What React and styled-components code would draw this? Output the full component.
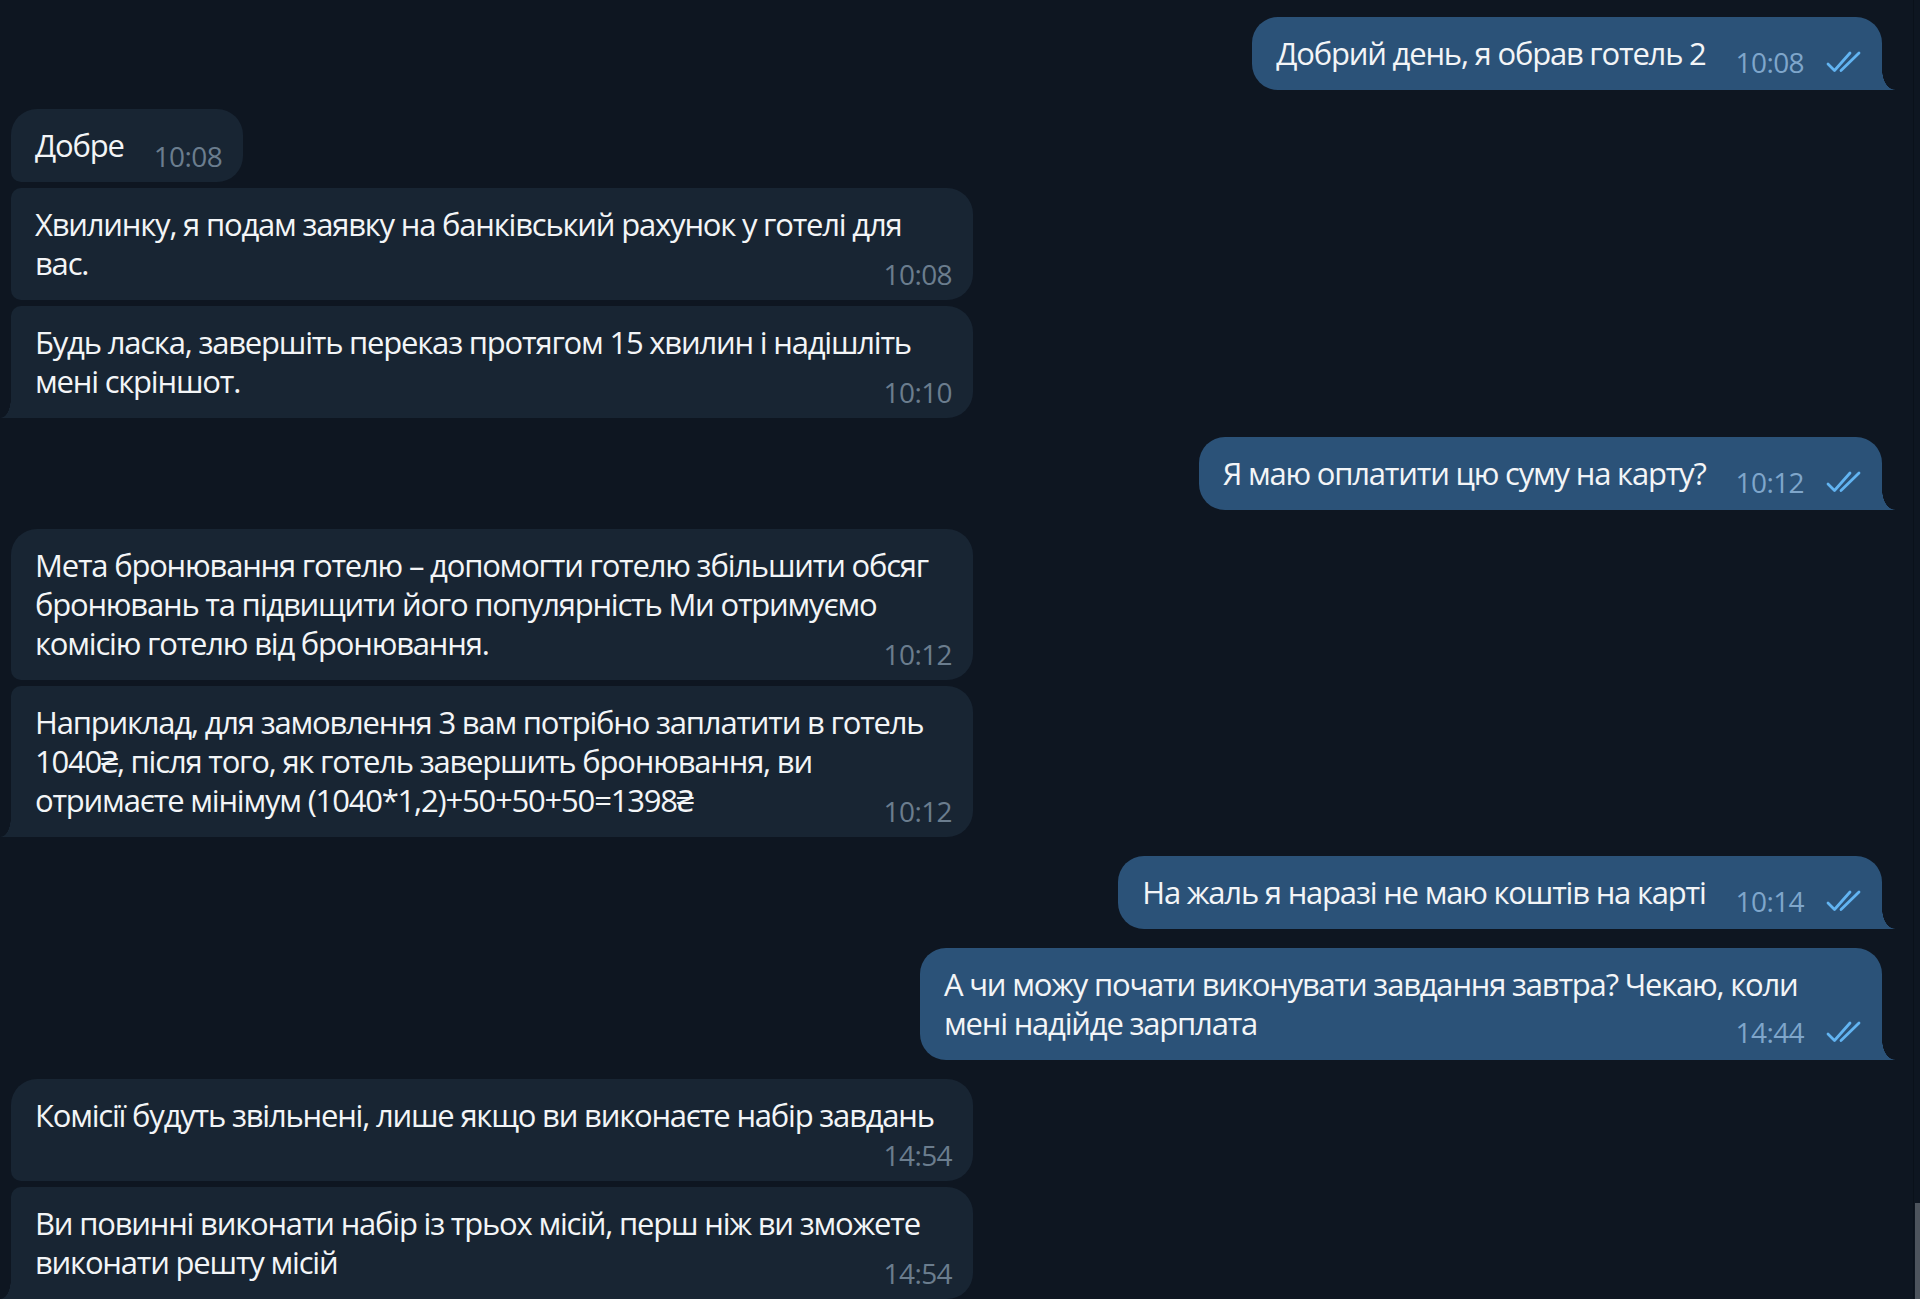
import React from "react";
import styled, { createGlobalStyle, css } from "styled-components";

const IN_BG = "#182533";
const OUT_BG = "#2b5278";

const GlobalStyle = createGlobalStyle`
  html, body {
    margin: 0;
    padding: 0;
    background: #0e1621;
  }
  body {
    font-family: "Open Sans", "Noto Sans", "DejaVu Sans", sans-serif;
    overflow: hidden;
  }
`;

const Page = styled.div`
  display: flex;
  height: 1299px;
  overflow: hidden;
  background: #0e1621;
`;

const Feed = styled.div`
  flex: 1;
  display: flex;
  flex-direction: column;
  padding: 0 31px 0 11px;
  margin-top: -60px;
`;

const ScrollTrack = styled.div`
  width: 6px;
  display: flex;
  flex-direction: column;
  justify-content: flex-end;
  border-left: 1px solid #0a111a;
`;

const ScrollThumb = styled.div`
  height: 96px;
  margin-left: 1px;
  background: #4d545d;
`;

const tailCss = (out) =>
  out
    ? css`
        &::after {
          content: "";
          position: absolute;
          bottom: 0;
          right: -13px;
          width: 13px;
          height: 20px;
          background: radial-gradient(ellipse 13px 20px at 100% 0, transparent 97%, ${OUT_BG} 100%);
        }
      `
    : css`
        &::after {
          content: "";
          position: absolute;
          bottom: 0;
          left: -10px;
          width: 10px;
          height: 20px;
          background: radial-gradient(ellipse 10px 20px at 0 0, transparent 97%, ${IN_BG} 100%);
        }
      `;

const Bubble = styled.div`
  position: relative;
  box-sizing: border-box;
  align-self: ${(p) => (p.$out ? "flex-end" : "flex-start")};
  width: ${(p) => (p.$wide ? "962px" : "auto")};
  margin-top: ${(p) => (p.$grouped ? 6 : 19)}px;
  padding: 17px ${(p) => (p.$out ? 18 : 21)}px 17px 24px;
  background: ${(p) => (p.$out ? OUT_BG : IN_BG)};
  color: #f3f5f7;
  border-radius: ${(p) => p.$radius};
  ${(p) => p.$tail && tailCss(p.$out)}
`;

const Line = styled.div`
  font-size: 31px;
  line-height: 39px;
  letter-spacing: -1.2px;
  white-space: pre;
`;

const LastRow = styled.div`
  display: flex;
  align-items: flex-end;
  justify-content: space-between;
  min-height: ${(p) => (p.$metaOnly ? "29px" : "auto")};
`;

const Meta = styled.div`
  display: flex;
  align-items: center;
  gap: 22px;
  margin-left: 30px;
  flex-shrink: 0;
`;

const Time = styled.span`
  font-size: 28px;
  line-height: 18px;
  letter-spacing: -0.6px;
  color: ${(p) => (p.$out ? "#7fa6cb" : "#6b7d8e")};
`;

const Checks = () => (
  <svg width="38" height="22" viewBox="0 0 38 22" fill="none">
    <path
      d="M2 13 L8.5 19.5 L24 2"
      stroke="#62b4f2"
      strokeWidth="2.8"
      strokeLinecap="round"
      strokeLinejoin="round"
    />
    <path d="M15 19.5 L33 2" stroke="#62b4f2" strokeWidth="2.8" strokeLinecap="round" />
  </svg>
);

const BIG = 26;
const SMALL = 10;

const radiusFor = (m) => {
  if (m.out) return `${BIG}px ${BIG}px 0 ${BIG}px`;
  const tl = m.grouped ? SMALL : BIG;
  const bl = m.tail ? 0 : SMALL;
  return `${tl}px ${BIG}px ${BIG}px ${bl}px`;
};

const messages = [
  { out: false, tail: true, lines: [""], time: "", cut: true },
  { out: true, tail: true, lines: ["Добрий день, я обрав готель 2"], time: "10:08" },
  { out: false, lines: ["Добре"], time: "10:08" },
  {
    out: false,
    grouped: true,
    wide: true,
    lines: ["Хвилинку, я подам заявку на банківський рахунок у готелі для", "вас."],
    time: "10:08",
  },
  {
    out: false,
    grouped: true,
    tail: true,
    wide: true,
    lines: ["Будь ласка, завершіть переказ протягом 15 хвилин і надішліть", "мені скріншот."],
    time: "10:10",
  },
  { out: true, tail: true, lines: ["Я маю оплатити цю суму на карту?"], time: "10:12" },
  {
    out: false,
    wide: true,
    lines: [
      "Мета бронювання готелю – допомогти готелю збільшити обсяг",
      "бронювань та підвищити його популярність Ми отримуємо",
      "комісію готелю від бронювання.",
    ],
    time: "10:12",
  },
  {
    out: false,
    grouped: true,
    tail: true,
    wide: true,
    lines: [
      "Наприклад, для замовлення 3 вам потрібно заплатити в готель",
      "1040₴, після того, як готель завершить бронювання, ви",
      "отримаєте мінімум (1040*1,2)+50+50+50=1398₴",
    ],
    time: "10:12",
  },
  { out: true, tail: true, lines: ["На жаль я наразі не маю коштів на карті"], time: "10:14" },
  {
    out: true,
    tail: true,
    wide: true,
    lines: ["А чи можу почати виконувати завдання завтра? Чекаю, коли", "мені надійде зарплата"],
    time: "14:44",
  },
  {
    out: false,
    wide: true,
    metaBelow: true,
    lines: ["Комісії будуть звільнені, лише якщо ви виконаєте набір завдань"],
    time: "14:54",
  },
  {
    out: false,
    grouped: true,
    tail: true,
    wide: true,
    lines: ["Ви повинні виконати набір із трьох місій, перш ніж ви зможете", "виконати решту місій"],
    time: "14:54",
  },
];

// last bubble of the previous group, scrolled almost out of view
const CutBubble = styled(Bubble)`
  width: 276px;
  height: 63px;
  margin-top: 0;
  margin-bottom: 4px;
`;

const Message = ({ m }) => {
  if (m.cut) {
    return <CutBubble $tail $radius={radiusFor(m)} />;
  }
  const body = m.metaBelow ? m.lines : m.lines.slice(0, -1);
  const last = m.metaBelow ? "" : m.lines[m.lines.length - 1];
  return (
    <Bubble
      $out={m.out}
      $grouped={m.grouped}
      $tail={m.tail}
      $wide={m.wide}
      $radius={radiusFor(m)}
    >
      {body.map((l, i) => (
        <Line key={i}>{l}</Line>
      ))}
      <LastRow $metaOnly={m.metaBelow}>
        {last ? <Line>{last}</Line> : <span />}
        <Meta>
          <Time $out={m.out}>{m.time}</Time>
          {m.out && <Checks />}
        </Meta>
      </LastRow>
    </Bubble>
  );
};

export default function App() {
  return (
    <>
      <GlobalStyle />
      <Page>
        <Feed>
          {messages.map((m, i) => (
            <Message key={i} m={m} />
          ))}
        </Feed>
        <ScrollTrack>
          <ScrollThumb />
        </ScrollTrack>
      </Page>
    </>
  );
}
